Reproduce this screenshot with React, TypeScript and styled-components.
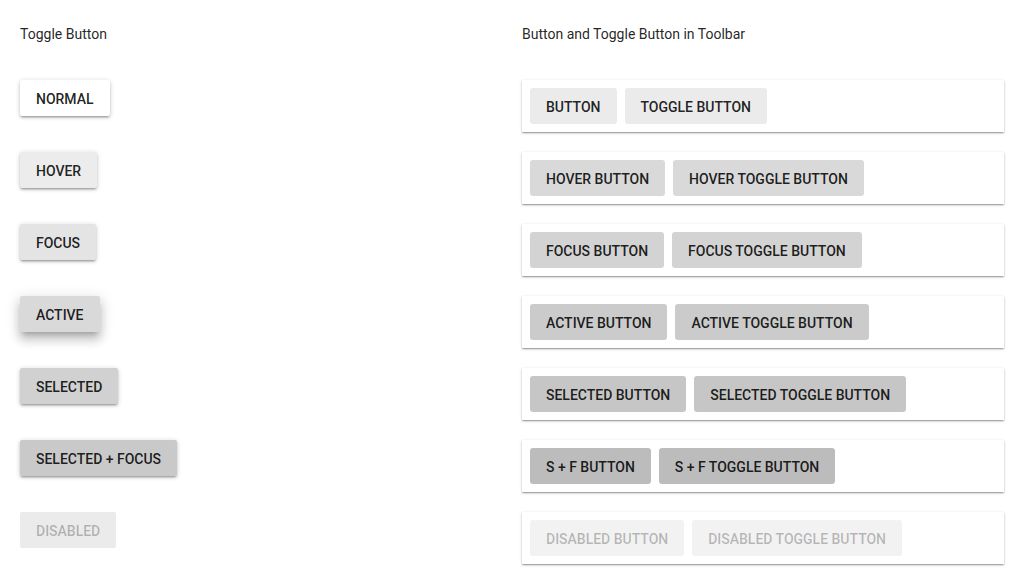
import React from "react";
import styled, { createGlobalStyle, css } from "styled-components";

const GlobalStyle = createGlobalStyle`
  html, body { margin: 0; padding: 0; background: #fff; }
  body { font-family: Roboto, "Noto Sans", sans-serif; color: rgba(0,0,0,0.87); }
`;

type State = "normal" | "hover" | "focus" | "active" | "selected" | "sf" | "disabled";

const raisedBg: Record<State, string> = {
  normal: "#ffffff",
  hover: "#ececec",
  focus: "#e4e4e4",
  active: "#d9d9d9",
  selected: "#d1d1d1",
  sf: "#c9c9c9",
  disabled: "#ebebeb",
};

const flatBg: Record<State, string> = {
  normal: "#ebebeb",
  hover: "#d9d9d9",
  focus: "#d3d3d3",
  active: "#cbcbcb",
  selected: "#c6c6c6",
  sf: "#bcbcbc",
  disabled: "#f2f2f2",
};

const Page = styled.div`
  display: grid;
  grid-template-columns: 482px 482px;
  column-gap: 20px;
  padding: 20px;
`;

const Column = styled.section`
  display: flex;
  flex-direction: column;
`;

const Title = styled.h2`
  margin: 0 0 32px;
  height: 28px;
  line-height: 28px;
  font-size: 14px;
  font-weight: 400;
  color: rgba(0, 0, 0, 0.87);
`;

const List = styled.div`
  display: grid;
  grid-auto-rows: 72px;
  align-items: start;
`;

const baseButton = css`
  height: 36px;
  padding: 1px 16px 0;
  box-sizing: border-box;
  border: none;
  border-radius: 2px;
  font-family: Roboto, "Noto Sans", sans-serif;
  font-weight: 500;
  font-size: 14px;
  letter-spacing: -0.01px;
  text-transform: uppercase;
  display: inline-flex;
  align-items: center;
  cursor: pointer;
  outline: none;
`;

const RaisedButton = styled.button<{ $state: State }>`
  ${baseButton};
  justify-self: start;
  background: ${(p) => raisedBg[p.$state]};
  color: ${(p) => (p.$state === "disabled" ? "rgba(0,0,0,0.26)" : "rgba(0,0,0,0.87)")};
  box-shadow: ${(p) =>
    p.$state === "disabled"
      ? "none"
      : p.$state === "active"
      ? "0 5px 5px -3px rgba(0,0,0,0.2), 0 8px 10px 1px rgba(0,0,0,0.14), 0 3px 14px 2px rgba(0,0,0,0.12)"
      : "0 1px 5px rgba(0,0,0,0.2), 0 2px 2px rgba(0,0,0,0.14), 0 3px 1px -2px rgba(0,0,0,0.12)"};
`;

const Toolbar = styled.div`
  display: flex;
  gap: 8px;
  padding: 8px;
  height: 52px;
  box-sizing: border-box;
  background: #fff;
  box-shadow: 0 1px 3px rgba(0,0,0,0.2), 0 1px 1px rgba(0,0,0,0.14), 0 2px 1px -1px rgba(0,0,0,0.12);
`;

const FlatButton = styled.button<{ $state: State }>`
  ${baseButton};
  border-radius: 3px;
  background: ${(p) => flatBg[p.$state]};
  color: ${(p) => (p.$state === "disabled" ? "rgba(0,0,0,0.26)" : "rgba(0,0,0,0.87)")};
`;

const leftItems: { label: string; state: State }[] = [
  { label: "Normal", state: "normal" },
  { label: "Hover", state: "hover" },
  { label: "Focus", state: "focus" },
  { label: "Active", state: "active" },
  { label: "Selected", state: "selected" },
  { label: "Selected + Focus", state: "sf" },
  { label: "Disabled", state: "disabled" },
];

const rightItems: { a: string; b: string; state: State }[] = [
  { a: "Button", b: "Toggle Button", state: "normal" },
  { a: "Hover Button", b: "Hover Toggle Button", state: "hover" },
  { a: "Focus Button", b: "Focus Toggle Button", state: "focus" },
  { a: "Active Button", b: "Active Toggle Button", state: "active" },
  { a: "Selected Button", b: "Selected Toggle Button", state: "selected" },
  { a: "S + F Button", b: "S + F Toggle Button", state: "sf" },
  { a: "Disabled Button", b: "Disabled Toggle Button", state: "disabled" },
];

export default function App() {
  return (
    <>
      <GlobalStyle />
      <Page>
        <Column>
          <Title>Toggle Button</Title>
          <List>
            {leftItems.map((it) => (
              <RaisedButton key={it.label} $state={it.state}>
                {it.label}
              </RaisedButton>
            ))}
          </List>
        </Column>
        <Column>
          <Title>Button and Toggle Button in Toolbar</Title>
          <List>
            {rightItems.map((it) => (
              <Toolbar key={it.a}>
                <FlatButton $state={it.state}>{it.a}</FlatButton>
                <FlatButton $state={it.state}>{it.b}</FlatButton>
              </Toolbar>
            ))}
          </List>
        </Column>
      </Page>
    </>
  );
}
